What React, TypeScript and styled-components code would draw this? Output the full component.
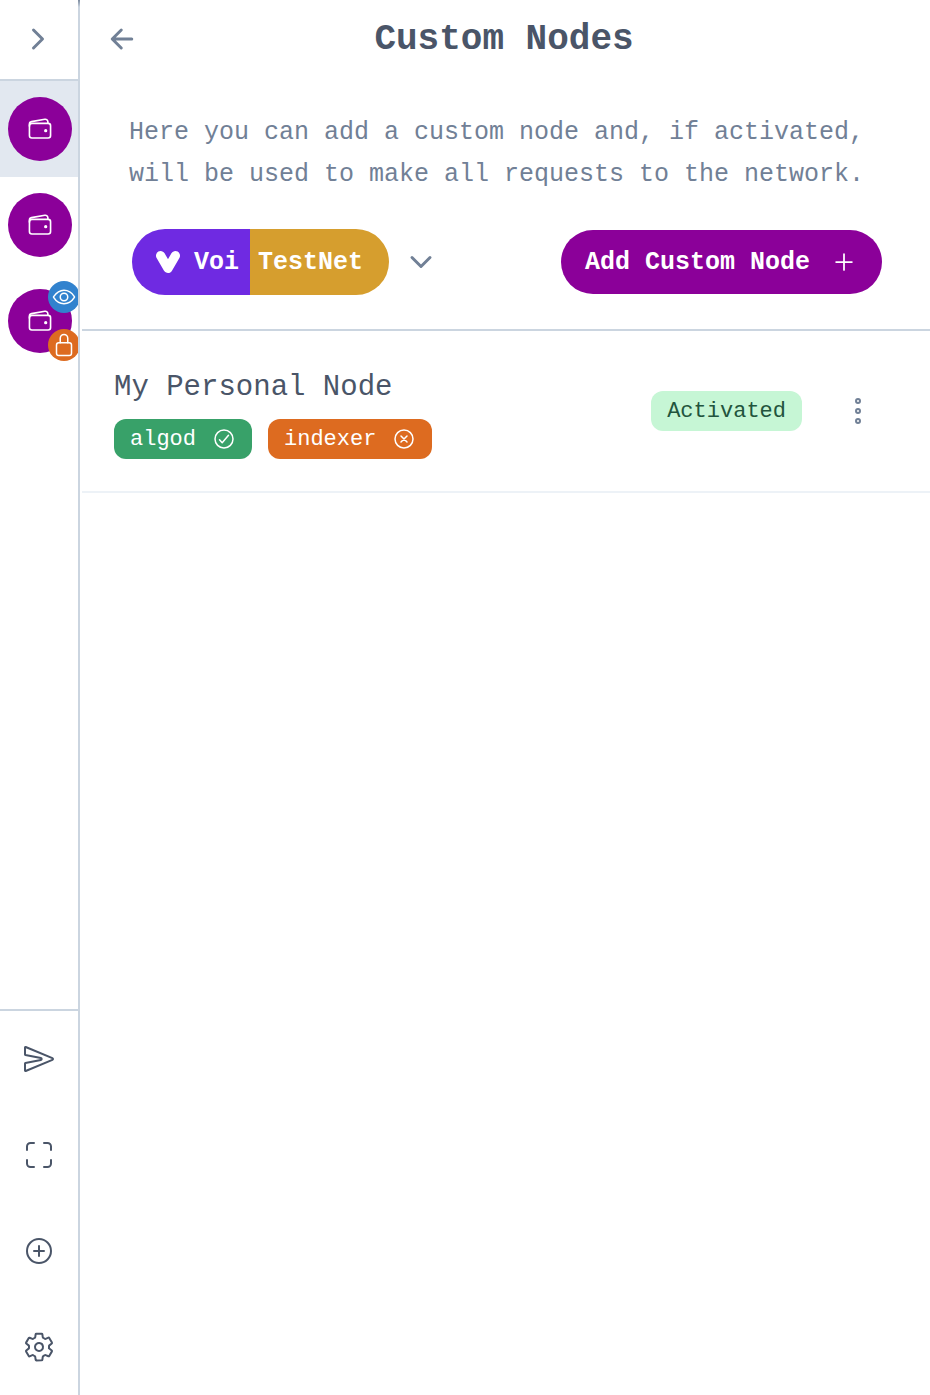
import React from "react";
import styled, { createGlobalStyle } from "styled-components";
import {
  IoAdd,
  IoAddCircleOutline,
  IoArrowBack,
  IoCheckmarkCircleOutline,
  IoChevronDown,
  IoChevronForward,
  IoCloseCircleOutline,
  IoEllipsisVerticalOutline,
  IoEyeOutline,
  IoLockClosedOutline,
  IoScanOutline,
  IoSendOutline,
  IoSettingsOutline,
  IoWalletOutline,
} from "react-icons/io5";

const color = {
  primary: "#8b0099",
  text: "#4a5568",
  subText: "#718096",
  border: "#cbd5e0",
  softBorder: "#edf2f7",
  selected: "#e2e8f0",
  blue: "#3182ce",
  orange: "#dd6b20",
  green: "#38a169",
  gold: "#d69e2e",
  voi: "#6f2ae2",
};

const GlobalStyle = createGlobalStyle`
  *, *::before, *::after { box-sizing: border-box; }
  body {
    margin: 0;
    background: #fff;
    color: ${color.text};
    font-family: "Liberation Mono", monospace;
  }
  button { font: inherit; color: inherit; border: 0; padding: 0; background: none; cursor: pointer; }
  h1, h2, p, ul { margin: 0; padding: 0; }
  ul { list-style: none; }
  svg { display: block; flex: none; }
`;

const Page = styled.div`
  display: flex;
  min-height: 100vh;
`;

const SideBar = styled.nav`
  display: flex;
  flex-direction: column;
  flex: none;
  width: 80px;
  border-right: 2px solid ${color.border};
  border-image: linear-gradient(${color.subText}, ${color.border} 8px) 1;
  overflow: hidden;
`;

const SideBarToggle = styled.button`
  display: grid;
  place-items: center;
  height: 81px;
  padding: 0 2px 2px 0;
  border-bottom: 2px solid ${color.border};
  color: ${color.subText};
`;

const AccountButton = styled.button<{ $selected?: boolean }>`
  display: block;
  width: 100%;
  padding: 16px 0 16px 8px;
  background: ${(p) => (p.$selected ? color.selected : "transparent")};
`;

const Avatar = styled.span`
  position: relative;
  display: grid;
  place-items: center;
  width: 64px;
  height: 64px;
  border-radius: 50%;
  background: ${color.primary};
  color: #fff;
`;

const Badge = styled.span<{ $place: "top" | "bottom"; $color: string }>`
  position: absolute;
  right: -8px;
  ${(p) => p.$place}: -8px;
  display: grid;
  place-items: center;
  width: 32px;
  height: 32px;
  border-radius: 50%;
  background: ${(p) => p.$color};
`;

const SideBarActions = styled.div`
  margin-top: auto;
  border-top: 2px solid ${color.border};
`;

const SideBarAction = styled.button`
  display: grid;
  place-items: center;
  width: 100%;
  height: 96px;
`;

const Main = styled.main`
  flex: 1;
  min-width: 0;
  margin-left: 2px;
`;

const Header = styled.header`
  display: grid;
  grid-template-columns: 80px 1fr 80px;
  align-items: center;
  height: 78px;
`;

const IconButton = styled.button`
  display: grid;
  place-items: center;
  width: 48px;
  height: 48px;
  color: ${color.subText};
`;

const BackButton = styled(IconButton)`
  margin-left: 16px;
`;

const Title = styled.h1`
  padding: 2px 4px 0 0;
  font-size: 36px;
  line-height: 44px;
  text-align: center;
`;

const Description = styled.p`
  padding: 34px 47px 0;
  color: ${color.subText};
  font-size: 25px;
  line-height: 42px;
`;

const Toolbar = styled.div`
  display: flex;
  align-items: center;
  justify-content: space-between;
  padding: 33px 48px 34px;
  border-bottom: 2px solid ${color.border};
`;

const NetworkSelect = styled.button`
  display: flex;
  align-items: center;
  gap: 16px;
  padding-left: 2px;
  color: ${color.subText};
`;

const NetworkPill = styled.span`
  display: flex;
  height: 66px;
  border-radius: 33px;
  overflow: hidden;
  color: #fff;
  font-size: 25px;
  font-weight: 700;
`;

const Chain = styled.span`
  display: flex;
  align-items: center;
  gap: 12px;
  padding: 0 11px 0 22px;
  background: ${color.voi};
`;

const Network = styled.span`
  display: flex;
  align-items: center;
  padding: 0 26px 0 8px;
  background: ${color.gold};
`;

const AddButton = styled.button`
  display: flex;
  align-items: center;
  gap: 20px;
  height: 64px;
  padding: 0 24px;
  border-radius: 32px;
  background: ${color.primary};
  color: #fff;
  font-size: 25px;
  font-weight: 700;
`;

const NodeRow = styled.li`
  display: flex;
  align-items: center;
  padding: 32px 48px 32px 32px;
  border-bottom: 2px solid ${color.softBorder};
`;

const NodeInfo = styled.div`
  flex: 1;
  min-width: 0;
`;

const NodeName = styled.h2`
  font-size: 29px;
  font-weight: 400;
  line-height: 50px;
`;

const TagList = styled.div`
  display: flex;
  gap: 16px;
  padding-top: 6px;
`;

const Tag = styled.span<{ $bg: string; $fg?: string }>`
  display: flex;
  align-items: center;
  gap: 16px;
  height: 40px;
  padding: 0 16px;
  border-radius: 12px;
  background: ${(p) => p.$bg};
  color: ${(p) => p.$fg ?? "#fff"};
  font-size: 22px;
`;

const MenuButton = styled(IconButton)`
  margin-left: 32px;
`;

function VoiLogo() {
  return (
    <svg width="28" height="28" viewBox="0 0 28 28" aria-hidden="true">
      <path
        d="M6.6 7.6 L14 20.4 L21.4 7.6"
        fill="none"
        stroke="currentColor"
        strokeWidth="9.2"
        strokeLinecap="round"
        strokeLinejoin="round"
      />
    </svg>
  );
}

function WalletAvatar({ children }: { children?: React.ReactNode }) {
  return (
    <Avatar>
      <IoWalletOutline size={26} />
      {children}
    </Avatar>
  );
}

export default function App() {
  return (
    <>
      <GlobalStyle />
      <Page>
        <SideBar aria-label="Accounts">
          <SideBarToggle aria-label="Expand sidebar">
            <IoChevronForward size={32} />
          </SideBarToggle>
          <AccountButton $selected aria-label="Account 1">
            <WalletAvatar />
          </AccountButton>
          <AccountButton aria-label="Account 2">
            <WalletAvatar />
          </AccountButton>
          <AccountButton aria-label="Account 3, watch only, re-keyed">
            <WalletAvatar>
              <Badge $place="top" $color={color.blue}>
                <IoEyeOutline size={24} />
              </Badge>
              <Badge $place="bottom" $color={color.orange}>
                <IoLockClosedOutline size={24} />
              </Badge>
            </WalletAvatar>
          </AccountButton>
          <SideBarActions>
            <SideBarAction aria-label="Send">
              <IoSendOutline size={32} />
            </SideBarAction>
            <SideBarAction aria-label="Scan QR code">
              <IoScanOutline size={32} />
            </SideBarAction>
            <SideBarAction aria-label="Add account">
              <IoAddCircleOutline size={32} />
            </SideBarAction>
            <SideBarAction aria-label="Settings">
              <IoSettingsOutline size={32} />
            </SideBarAction>
          </SideBarActions>
        </SideBar>

        <Main>
          <Header>
            <BackButton aria-label="Go back">
              <IoArrowBack size={32} />
            </BackButton>
            <Title>Custom Nodes</Title>
          </Header>
          <Description>
            Here you can add a custom node and, if activated, will be used to
            make all requests to the network.
          </Description>
          <Toolbar>
            <NetworkSelect aria-haspopup="listbox">
              <NetworkPill>
                <Chain>
                  <VoiLogo />
                  Voi
                </Chain>
                <Network>TestNet</Network>
              </NetworkPill>
              <IoChevronDown size={32} />
            </NetworkSelect>
            <AddButton>
              Add Custom Node
              <IoAdd size={28} />
            </AddButton>
          </Toolbar>
          <ul>
            <NodeRow>
              <NodeInfo>
                <NodeName>My Personal Node</NodeName>
                <TagList>
                  <Tag $bg={color.green}>
                    algod
                    <IoCheckmarkCircleOutline size={24} />
                  </Tag>
                  <Tag $bg={color.orange}>
                    indexer
                    <IoCloseCircleOutline size={24} />
                  </Tag>
                </TagList>
              </NodeInfo>
              <Tag $bg="#c6f6d5" $fg="#22543d">
                Activated
              </Tag>
              <MenuButton aria-label="Node options">
                <IoEllipsisVerticalOutline size={32} />
              </MenuButton>
            </NodeRow>
          </ul>
        </Main>
      </Page>
    </>
  );
}
